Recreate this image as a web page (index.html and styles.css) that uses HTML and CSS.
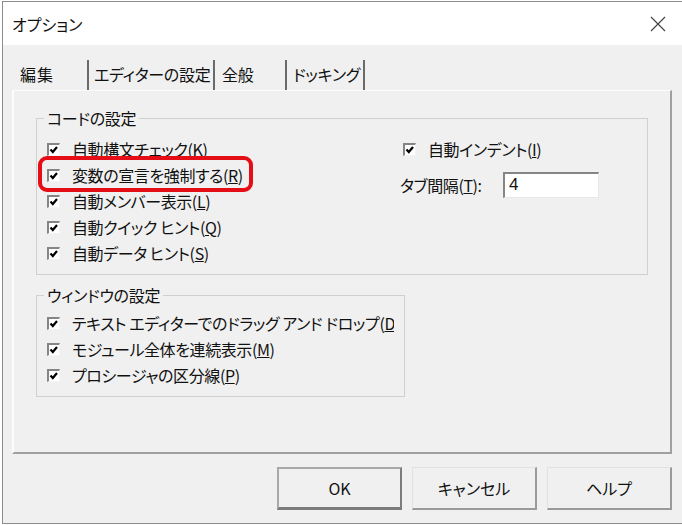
FILE: index.html
```html
<!DOCTYPE html>
<html lang="ja">
<head>
  <meta charset="UTF-8">
  <title>オプション</title>
  <link rel="stylesheet" href="styles.css">
</head>
<body>

  <div class="window">
    <div class="titlebar">
      <span class="title">オプション</span>
      <svg class="close" width="16" height="16" viewBox="0 0 16 16">
        <path d="M1 1 L15 15 M15 1 L1 15" stroke="#444" stroke-width="1.2" fill="none"/>
      </svg>
    </div>

    <div class="body">
      <div class="tabs">
        <div class="tab tab-edit">編集</div>
        <div class="tab tab-editor">エディターの設定</div>
        <div class="tab tab-general">全般</div>
        <div class="tab tab-dock">ドッキング</div>
      </div>

      <div class="panel">
        <fieldset class="group group-code">
          <legend>コードの設定</legend>
          <div class="code-cols">
            <div class="col">
              <div class="check"><span class="box"></span><span>自動構文チェック(<u>K</u>)</span></div>
              <div class="check"><span class="mark"><span class="box"></span><span>変数の宣言を強制する(<u>R</u>)</span></span></div>
              <div class="check"><span class="box"></span><span>自動メンバー表示(<u>L</u>)</span></div>
              <div class="check"><span class="box"></span><span>自動クイック ヒント(<u>Q</u>)</span></div>
              <div class="check"><span class="box"></span><span>自動データ ヒント(<u>S</u>)</span></div>
            </div>
            <div class="col">
              <div class="check indent"><span class="box"></span><span>自動インデント(<u>I</u>)</span></div>
              <div class="tabwidth">
                <span class="tabwidth-label">タブ間隔(<u>T</u>):</span>
                <span class="field">4</span>
              </div>
            </div>
          </div>
        </fieldset>

        <fieldset class="group group-window">
          <legend>ウィンドウの設定</legend>
          <div class="check"><span class="box"></span><span class="clip">テキスト エディターでのドラッグ アンド ドロップ(<u>D</u>)</span></div>
          <div class="check"><span class="box"></span><span>モジュール全体を連続表示(<u>M</u>)</span></div>
          <div class="check"><span class="box"></span><span>プロシージャの区分線(<u>P</u>)</span></div>
        </fieldset>
      </div>

      <div class="buttons">
        <div class="btn btn-default">OK</div>
        <div class="btn">キャンセル</div>
        <div class="btn">ヘルプ</div>
      </div>
    </div>
  </div>

</body>
</html>
```

FILE: styles.css
```css
body {
  margin: 0;
  background: #ffffff;
  font-family: "Noto Sans CJK JP", "Noto Sans", sans-serif;
  font-feature-settings: "palt";
  color: #111;
}
.window {
  margin: 1px 0 0 2px;
  width: 680px;
  height: 523px;
  box-sizing: border-box;
  border: 1px solid #8c8c8c;
  border-right: none;
  background: #f0f0f0;
  display: flex;
  flex-direction: column;
}
.titlebar {
  height: 43px;
  flex: none;
  background: #ffffff;
  display: flex;
  align-items: center;
  justify-content: space-between;
  padding: 0 16px 0 9px;
}
.title {
  font-size: 16px;
}
.body {
  padding: 15px 0 0 9px;
}

/* tabs */
.tabs {
  display: flex;
  height: 30px;
}
.tab {
  box-sizing: border-box;
  height: 30px;
  line-height: 28px;
  font-size: 16px;
  letter-spacing: -0.3px;
  white-space: nowrap;
  padding-left: 5px;
  border-right: 2px solid #6a6a6a;
}
.tab-edit { width: 77px; padding-left: 8px; letter-spacing: 1px; }
.tab-editor { width: 126px; }
.tab-general { width: 72px; padding-left: 7px; }
.tab-dock { width: 78px; padding-left: 6px; }

.panel {
  box-sizing: border-box;
  width: 660px;
  height: 364px;
  border-top: 1px solid #fcfcfc;
  border-left: 2px solid #fcfcfc;
  border-right: 2px solid #a0a0a0;
  border-bottom: 2px solid #a0a0a0;
  padding: 17px 0 0 22px;
}

/* group boxes */
.group {
  margin: 0;
  min-width: 0;
  box-sizing: border-box;
  border: 1px solid #d0d0d0;
  padding: 8px 10px 8px 10px;
}
.group legend {
  font-size: 16px;
  letter-spacing: -0.3px;
  line-height: 20px;
  padding: 0 3px;
  margin-left: -3px;
}
.group-code {
  width: 612px;
}
.group-window {
  width: 369px;
  margin-top: 10px;
  padding-top: 5px;
}
.code-cols {
  display: grid;
  grid-template-columns: 353px 1fr;
}
.check {
  display: flex;
  align-items: center;
  height: 26px;
  font-size: 16px;
  letter-spacing: -0.4px;
  white-space: nowrap;
}
.check.indent {
  margin-left: 3px;
}
.box {
  flex: none;
  box-sizing: border-box;
  width: 13px;
  height: 13px;
  margin-right: 12px;
  background: #ffffff url("data:image/svg+xml,%3Csvg xmlns='http://www.w3.org/2000/svg' width='10' height='10'%3E%3Cpath d='M1.5 4.5 L3.8 7 L8 2' stroke='%23000' stroke-width='2.2' fill='none'/%3E%3C/svg%3E") no-repeat 0 0;
  border-top: 2px solid #858585;
  border-left: 2px solid #858585;
  border-right: 1px solid #f4f4f4;
  border-bottom: 1px solid #f4f4f4;
}
.clip {
  display: block;
  max-width: 325px;
  overflow: hidden;
}
.mark {
  position: relative;
  display: inline-flex;
  align-items: center;
  height: 26px;
}
.mark::after {
  content: "";
  position: absolute;
  left: -9px;
  right: -10px;
  top: -6px;
  bottom: -4px;
  border: 4px solid #e50d16;
  border-radius: 9px;
}
.tabwidth {
  display: flex;
  align-items: center;
  margin-top: 10px;
  font-size: 16px;
  letter-spacing: -0.4px;
}
.tabwidth-label {
  width: 103px;
}
.field {
  box-sizing: border-box;
  width: 96px;
  height: 26px;
  background: #ffffff;
  border-top: 2px solid #858585;
  border-left: 2px solid #858585;
  border-right: 1px solid #e8e8e8;
  border-bottom: 1px solid #e8e8e8;
  padding-left: 4px;
  line-height: 22px;
  font-family: "Liberation Sans", sans-serif;
  font-size: 17px;
}

/* buttons */
.buttons {
  display: flex;
  justify-content: flex-end;
  gap: 10px;
  margin: 13px 10px 0 0;
}
.btn {
  box-sizing: border-box;
  width: 125px;
  height: 43px;
  display: flex;
  align-items: center;
  justify-content: center;
  font-size: 16px;
  background: #f0f0f0;
  border-top: 1px solid #e2e2e2;
  border-left: 1px solid #e2e2e2;
  border-right: 2px solid #9a9a9a;
  border-bottom: 2px solid #9a9a9a;
}
.btn-default {
  border-top: 2px solid #a8a8a8;
  border-left: 2px solid #a8a8a8;
  border-right: 2px solid #7c7c7c;
  border-bottom: 3px solid #7c7c7c;
}
```
